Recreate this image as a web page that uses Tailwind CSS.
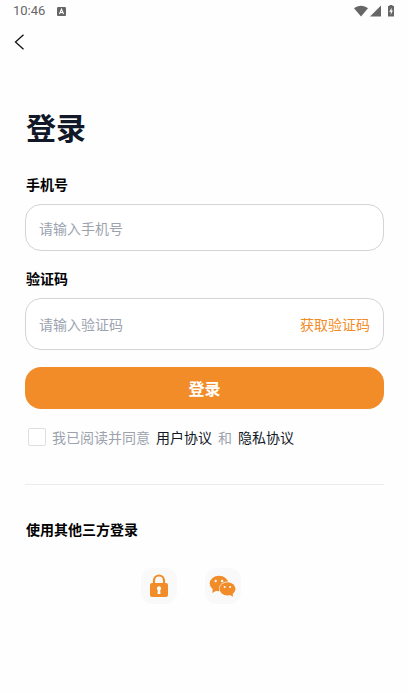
<!DOCTYPE html>
<html lang="zh-CN">
<head>
<meta charset="utf-8">
<meta name="viewport" content="width=device-width, initial-scale=1">
<title>登录</title>
<script src="https://cdn.jsdelivr.net/npm/@tailwindcss/browser@4"></script>
</head>
<body class="min-h-screen bg-[#fefefe] font-['Noto_Sans_CJK_SC',sans-serif] text-sm text-black">
<div class="flex h-6 items-center justify-between pl-[13px] pr-3 text-[#666]">
  <div class="flex items-center gap-3 pb-0.5">
    <span class="font-[Roboto,sans-serif] text-[13px] leading-5">10:46</span>
    <svg class="size-[9px]" viewBox="0 0 8 8" aria-hidden="true"><rect width="8" height="8" rx="1" fill="#666"/><path d="M2.200 6.200 4 2l1.800 4.200M2.900 4.900h2.200" fill="none" stroke="#fff" stroke-width="1"/></svg>
  </div>
  <div class="flex items-center gap-0.5 pb-0.5">
    <svg class="h-3 w-3.5" viewBox="0 0 14 12" aria-hidden="true"><path d="M0 3.200C4-.2 10-.2 14 3.200L7 11.500Z" fill="#666"/></svg>
    <svg class="h-3 w-[11px]" viewBox="0 0 11 12" aria-hidden="true"><path d="M11 .5v11H0Z" fill="#666"/></svg>
    <svg class="ml-1 h-3 w-2" viewBox="0 0 8 12" aria-hidden="true"><path d="M2.500 0h3v1H7v10.500H1V1h1.500Z" fill="#666"/><path d="M4.600 2.800 2.300 6.700h1.500v3L5.900 5.600H4.600Z" fill="#fff"/></svg>
  </div>
</div>
<header class="flex h-9 items-center px-[13px]">
  <button type="button" aria-label="返回" class="flex h-6 w-4 items-center"><svg class="h-4 w-3" viewBox="0 0 12 16" fill="none" stroke="#111" stroke-width="1.300" aria-hidden="true"><path d="M10.500 .8 2.500 8l8 7.200"/></svg></button>
</header>
<main class="pl-[25px] pr-[23px] pt-[46px]">
  <h1 class="pl-px text-[30px] font-bold leading-10 text-[#111827]">登录</h1>
  <form class="mt-7">
    <label for="phone" class="block pl-px font-bold leading-5">手机号</label>
    <div class="mt-2.5 flex h-[47px] items-center rounded-2xl border border-[#d4d4d8] bg-white px-[13px]">
      <input id="phone" type="tel" placeholder="请输入手机号" class="w-full min-w-0 bg-transparent leading-5 outline-none placeholder:text-[#9ca3af]">
    </div>
    <label for="code" class="mt-[17px] block pl-px font-bold leading-5">验证码</label>
    <div class="mt-2.5 flex h-13 items-center rounded-2xl border border-[#d4d4d8] bg-white px-[13px]">
      <input id="code" type="text" placeholder="请输入验证码" class="min-w-0 flex-1 bg-transparent leading-5 outline-none placeholder:text-[#9ca3af]">
      <button type="button" class="shrink-0 text-[#f28c28]">获取验证码</button>
    </div>
    <button type="submit" class="mt-[17px] h-[42px] w-full rounded-2xl bg-[#f28c28] text-base font-bold text-white">登录</button>
    <div class="mt-[18px] flex items-center gap-1.5 pl-[3px] leading-5 text-[#9ca3af]">
      <input id="agree" type="checkbox" class="size-[18px] shrink-0 appearance-none rounded-xs border border-[#dedede] bg-white checked:bg-[#f28c28]">
      <label for="agree">我已阅读并同意</label>
      <a href="#terms" class="text-[#111827]">用户协议</a>
      <span>和</span>
      <a href="#privacy" class="text-[#111827]">隐私协议</a>
    </div>
  </form>
  <section class="mt-[37px] border-t border-[#ececec] pt-[34px]">
    <h2 class="pl-px font-bold leading-5">使用其他三方登录</h2>
    <div class="mt-[29px] flex justify-center">
      <button type="button" aria-label="密码登录" class="mr-7 flex size-9 items-center justify-center rounded-xl bg-[#f9f9f9]">
        <svg class="h-6 w-5" viewBox="0 0 20 24" aria-hidden="true"><path d="M5 10V6.500a5 5 0 0 1 10 0V10" fill="none" stroke="#f28c28" stroke-width="2.200"/><rect x="1" y="9" width="18" height="14" rx="2" fill="#f28c28"/><path d="M10 12.300a2.200 2.200 0 0 1 1.200 4L11.500 20h-3l.3-3.700a2.200 2.200 0 0 1 1.200-4Z" fill="#fff"/></svg>
      </button>
      <button type="button" aria-label="微信登录" class="mr-7 flex size-9 items-center justify-center rounded-xl bg-[#f9f9f9]">
        <svg class="h-6 w-7" viewBox="0 0 28 24" aria-hidden="true"><g fill="#f28c28"><ellipse cx="10" cy="9.500" rx="9.300" ry="7.800"/><path d="m4 14-.8 5 4.500-2.500Z"/></g><ellipse cx="18.500" cy="14.800" rx="8.500" ry="7.200" fill="#f9f9f9"/><g fill="#f28c28"><ellipse cx="18.500" cy="14.800" rx="8" ry="6.600"/><path d="m20 20.500 4 2.300-.5-4Z"/></g><g fill="#f9f9f9"><circle cx="6.700" cy="7" r="1.200"/><circle cx="13.100" cy="7" r="1.200"/><circle cx="15.700" cy="13" r="1.100"/><circle cx="21.100" cy="13" r="1.100"/></g></svg>
      </button>
    </div>
  </section>
</main>
</body>
</html>
